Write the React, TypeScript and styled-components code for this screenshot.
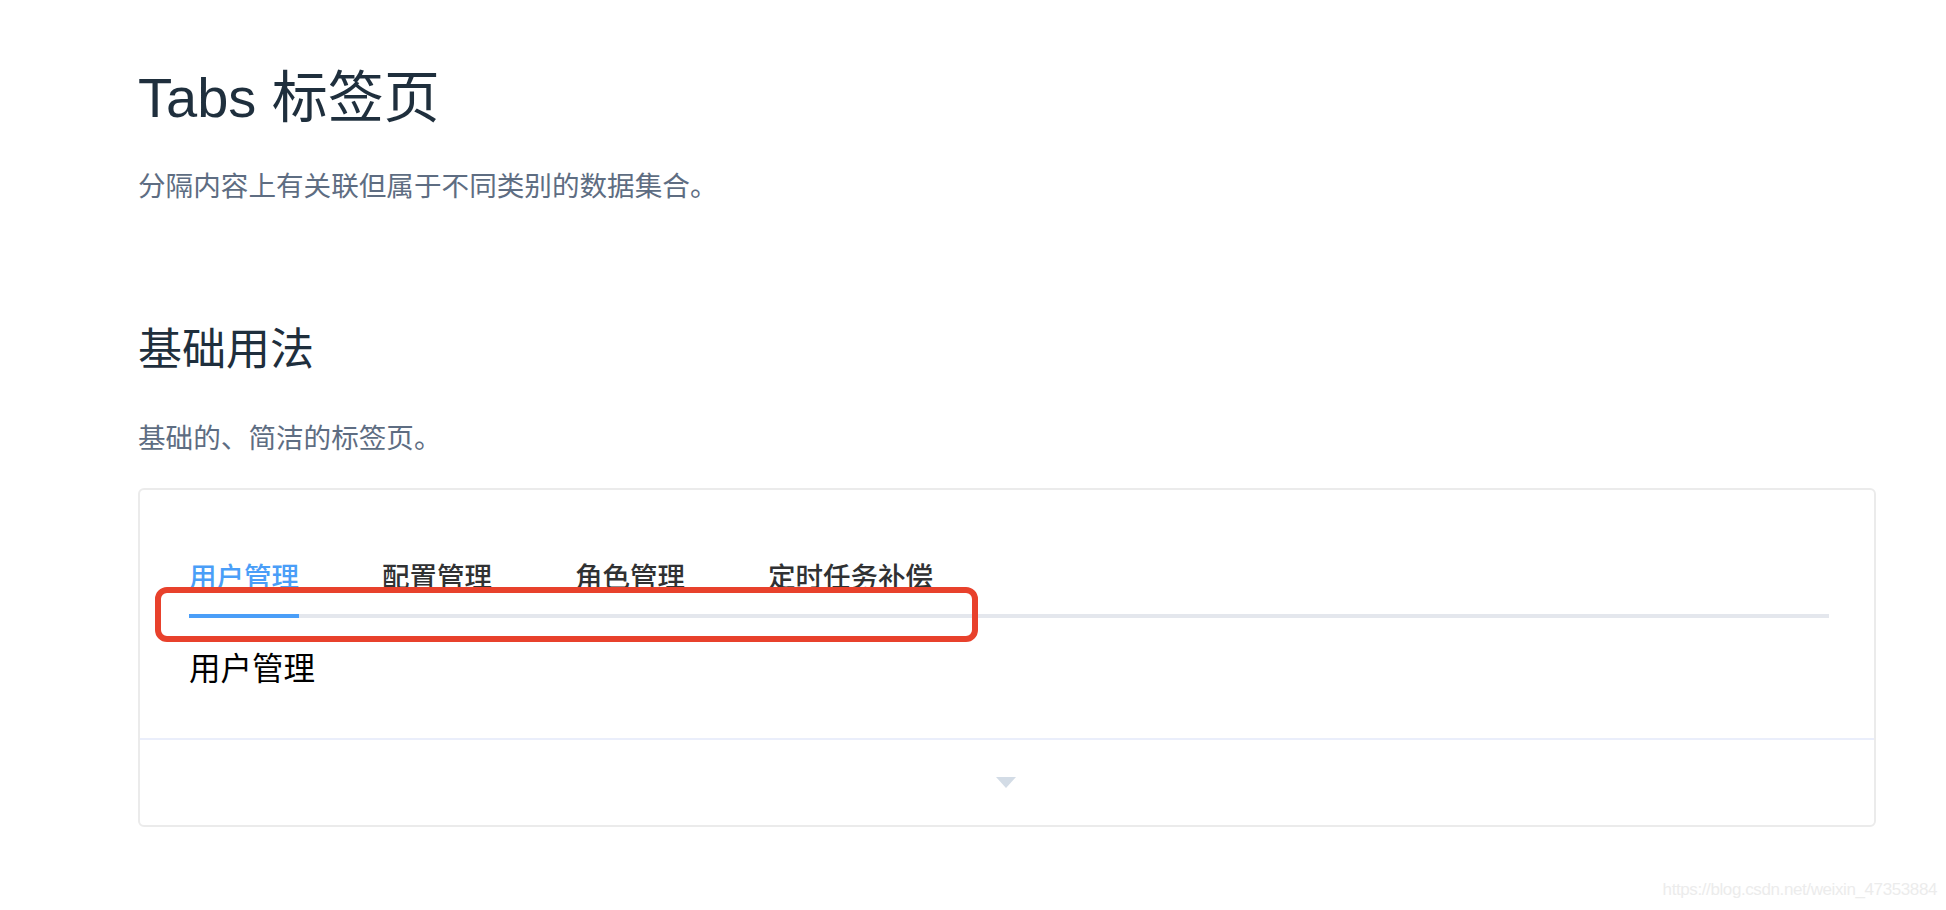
import styled, { createGlobalStyle } from 'styled-components';

const GlobalStyle = createGlobalStyle`
  html, body {
    margin: 0;
    padding: 0;
    background: #fff;
  }
  body {
    font-family: "Liberation Sans", "Noto Sans CJK SC", sans-serif;
  }
`

const Page = styled.div`
  position: relative;
  width: 1946px;
  height: 910px;
  padding-left: 138px;
  box-sizing: border-box;
  overflow: hidden;
`
const Title = styled.h2`
  margin: 58px 0 0;
  font-size: 56px;
  line-height: 80px;
  font-weight: 400;
  color: #1f2f3d;
`
const Lead = styled.p<{ $top: number }>`
  margin: ${p => p.$top}px 0 0;
  font-size: 27.6px;
  line-height: 40px;
  color: #5e6d82;
`
const SectionTitle = styled.h3`
  margin: 113px 0 0;
  font-size: 44px;
  line-height: 60px;
  font-weight: 400;
  color: #1f2f3d;
`
const DemoBlock = styled.div`
  position: relative;
  margin-top: 29px;
  width: 1738px;
  border: 2px solid #ebebeb;
  border-radius: 6px;
  box-sizing: border-box;
`
const Source = styled.div`
  padding: 52px 45px 49px 49px;
`
const TabHeader = styled.div`
  display: flex;
  position: relative;
  border-bottom: 4px solid #e4e7ed;
`
const TabItem = styled.div<{ $active?: boolean }>`
  position: relative;
  height: 72px;
  line-height: 72px;
  padding: 0 41.5px;
  font-size: 27.5px;
  font-weight: 500;
  color: ${p => (p.$active ? '#4a9ef8' : '#303133')};
  &:first-child {
    padding-left: 0;
  }
  &::after {
    content: '';
    display: ${p => (p.$active ? 'block' : 'none')};
    position: absolute;
    left: 0;
    right: 41.5px;
    bottom: -4px;
    height: 4px;
    background: #4a9ef8;
  }
`
const TabPane = styled.div`
  margin-top: 31px;
  font-size: 31.5px;
  line-height: 40px;
  color: #000;
`
const ControlBar = styled.div`
  height: 85px;
  border-top: 2px solid #eaeefb;
  display: flex;
  align-items: center;
  justify-content: center;
`
const Caret = styled.span`
  width: 0;
  height: 0;
  border-left: 10px solid transparent;
  border-right: 10px solid transparent;
  border-top: 11px solid #d3dce6;
  margin-left: -2px;
`
const Highlight = styled.div`
  position: absolute;
  left: 15px;
  top: 97px;
  width: 823px;
  height: 55px;
  border: 6px solid #e8412c;
  border-radius: 12px;
  box-sizing: border-box;
  pointer-events: none;
`
const Watermark = styled.div`
  position: absolute;
  right: 9px;
  bottom: 10px;
  font-size: 17px;
  letter-spacing: -0.4px;
  color: #ececec;
`

const tabs = ['用户管理', '配置管理', '角色管理', '定时任务补偿']

export default function App() {
  return (
    <Page>
      <GlobalStyle />
      <Title>Tabs 标签页</Title>
      <Lead $top={29}>分隔内容上有关联但属于不同类别的数据集合。</Lead>
      <SectionTitle>基础用法</SectionTitle>
      <Lead $top={39}>基础的、简洁的标签页。</Lead>
      <DemoBlock>
        <Source>
          <TabHeader>
            {tabs.map((t, i) => (
              <TabItem key={t} $active={i === 0}>{t}</TabItem>
            ))}
          </TabHeader>
          <TabPane>用户管理</TabPane>
        </Source>
        <ControlBar>
          <Caret />
        </ControlBar>
        <Highlight />
      </DemoBlock>
      <Watermark>https://blog.csdn.net/weixin_47353884</Watermark>
    </Page>
  )
}
